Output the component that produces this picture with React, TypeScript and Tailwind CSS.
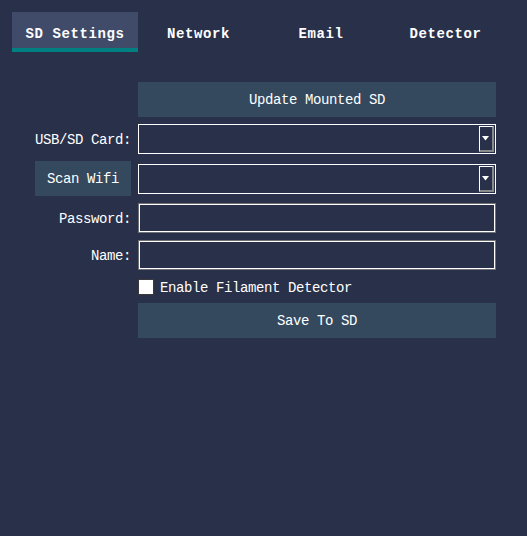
import React, { useState } from "react";
import clsx from "clsx";

const tabs = ["SD Settings", "Network", "Email", "Detector"];

const fieldBox = "h-[30px] w-full bg-transparent text-white outline-none";

function Select() {
  return (
    <div className={clsx(fieldBox, "relative border border-white")}>
      <span className="absolute right-[1px] top-[1px] flex h-[26px] w-[15px] items-center justify-center border-l border-t border-white border-r-2 border-b-2 border-r-[#8a8a8a] border-b-[#8a8a8a]">
        <svg width="8" height="5" viewBox="0 0 8 5">
          <path d="M0 0 H7 L3.5 4.5 Z" fill="#fff" />
        </svg>
      </span>
    </div>
  );
}

function TextInput({ type = "text" }: { type?: string }) {
  return (
    <div className="p-[1px] bg-[#6f7176]">
      <input
        type={type}
        className="block h-[28px] w-full border border-white bg-[#293049] px-1 text-white outline-none"
      />
    </div>
  );
}

function Label({ children }: { children: React.ReactNode }) {
  return <span className="justify-self-end self-center pt-[2px] text-white">{children}</span>;
}

const actionButton =
  "flex h-[35px] w-full items-center justify-center pt-[1px] bg-[#34495e] text-white";

export default function App() {
  const [active, setActive] = useState(0);
  const [enabled, setEnabled] = useState(false);

  return (
    <div
      className="h-[536px] w-[527px] bg-[#293049] text-[14px] tracking-[-0.4px]"
      style={{ fontFamily: '"Liberation Mono", "DejaVu Sans Mono", monospace' }}
    >
      <div className="grid grid-cols-[126px_121px_124px_125px] px-[12px] pt-[12px]">
        {tabs.map((tab, i) => (
          <button
            key={tab}
            type="button"
            onClick={() => setActive(i)}
            className={clsx(
              "flex h-[40px] items-center justify-center pt-[8px] font-bold tracking-[0.6px] text-white",
              i === active ? "border-b-4 border-[#008080] bg-[#3f4b69]" : "border-b-4 border-transparent"
            )}
          >
            {tab}
          </button>
        ))}
      </div>

      <div className="mt-[30px] grid grid-cols-[131px_358px] gap-x-[7px] gap-y-[7px]">
        <span />
        <button type="button" className={actionButton}>
          Update Mounted SD
        </button>

        <Label>USB/SD Card:</Label>
        <Select />

        <button
          type="button"
          className="justify-self-end flex h-[35px] w-[96px] items-center justify-center pt-[1px] bg-[#34495e] text-white"
        >
          Scan Wifi
        </button>
        <div className="self-center">
          <Select />
        </div>

        <Label>Password:</Label>
        <TextInput type="password" />

        <Label>Name:</Label>
        <TextInput />

        <span />
        <label className="mt-[1px] flex h-[18px] items-center gap-[6px] text-white">
          <input
            type="checkbox"
            checked={enabled}
            onChange={() => setEnabled(!enabled)}
            className="h-[16px] w-[16px] appearance-none border border-[#3a3a3a] bg-white checked:bg-[#008080]"
          />
          <span className="pt-[2px]">Enable Filament Detector</span>
        </label>

        <span />
        <button type="button" className={actionButton}>
          Save To SD
        </button>
      </div>
    </div>
  );
}
